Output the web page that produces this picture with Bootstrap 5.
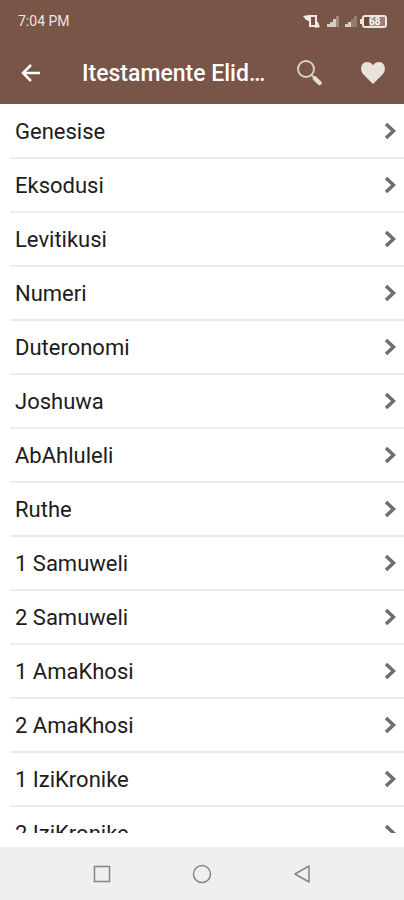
<!DOCTYPE html>
<html lang="xh">
<head>
<meta charset="utf-8">
<meta name="viewport" content="width=device-width, initial-scale=1">
<title>Itestamente Elidala</title>
<link href="https://cdn.jsdelivr.net/npm/bootstrap@5.3.0/dist/css/bootstrap.min.css" rel="stylesheet">
<style>
body { font-family: Roboto, sans-serif; background: #fff; }
.app-top { background: #795548; color: #fff; }
.status { height: 42px; padding: 0 16px 0 18px; font-size: 14px; color: #eee4df; }
.toolbar { height: 62px; padding: 0 16px; }
.toolbar .btn { width: 30px; height: 30px; }
.toolbar h1 { font-size: 23px; line-height: 28px; font-weight: 500; margin-left: 36px; padding-top: 2px; }
.tool-actions { gap: 34px; }
.books { margin-bottom: 14px; padding-top: 1px; }
.book { height: 54px; margin-left: 10px; padding: 0 7px 0 5px; border-bottom: 2px solid #ececec; font-size: 22px; line-height: 28px; color: #1c1c1c; }
.book span { padding-top: 2px; }
.sysnav { height: 53px; background: #efefef; gap: 70px; }
.sysnav .btn { width: 30px; height: 30px; }
</style>
<script src="https://cdn.jsdelivr.net/npm/bootstrap@5.3.0/dist/js/bootstrap.bundle.min.js" defer></script>
</head>
<body class="d-flex flex-column vh-100 overflow-hidden">
<header class="app-top flex-shrink-0">
  <div class="status d-flex align-items-center justify-content-between">
    <span>7:04 PM</span>
    <svg width="86" height="16" viewBox="0 0 86 16" role="img" aria-label="Vibrate, signal, battery 68%">
      <rect x="8" y="3" width="6" height="10" fill="none" stroke="#f1e9e4" stroke-width="2"/><path d="M1 3l6-1v6l-3-1zM18 14l-5 1V8l3 1z" fill="#f1e9e4"/>
      <path d="M25 14v-3h3v-2h3v-3h3v8z" fill="#d8cbc4"/><path d="M34 3h3v11h-3z" fill="#a18a80"/>
      <path d="M43 14v-3h3v-2h3v5z" fill="#d8cbc4"/><path d="M49 6h3v-3h3v11h-6z" fill="#967b70"/>
      <rect x="61" y="3" width="23" height="11" rx="2" fill="#6c493d" stroke="#eee4df" stroke-width="2"/>
      <path d="M58 6h2v5h-2z" fill="#eee4df"/><path d="M67 4h10v9h-10z" fill="#a98f84"/><path d="M77 4h6v9h-6z" fill="#9b8177"/>
      <text x="67" y="12" font-size="10" font-weight="500" fill="#fff">68</text>
    </svg>
  </div>
  <nav class="toolbar d-flex align-items-center">
    <button class="btn p-0 border-0 d-flex align-items-center justify-content-center flex-shrink-0" type="button" aria-label="Back">
      <svg width="20" height="18" viewBox="0 0 20 18" fill="none" stroke="#fff" stroke-width="2.500"><path d="M19 9H2M10 1L2 9l8 8"/></svg>
    </button>
    <h1 class="mb-0 text-nowrap flex-grow-1">Itestamente Elid…</h1>
    <div class="tool-actions d-flex flex-shrink-0">
      <button class="btn p-0 border-0 d-flex align-items-center justify-content-center" type="button" aria-label="Search">
        <svg width="26" height="26" viewBox="0 0 26 26" fill="none"><circle cx="10" cy="9" r="8" stroke="#d9cec8" stroke-width="2"/><path d="M15.500 15l3 3" stroke="#d9cec8" stroke-width="2"/><path d="M19 18.500l4.500 4.500" stroke="#e4dbd5" stroke-width="4.500" stroke-linecap="round"/></svg>
      </button>
      <button class="btn p-0 border-0 d-flex align-items-center justify-content-center" type="button" aria-label="Favourites">
        <svg width="26" height="24" viewBox="0 0 26 24"><path d="M13 23L3.500 13.500C-.5 9.500.5 1 7 1c3 0 5 1.500 6 3.500C14 2.500 16 1 19 1c6.500 0 7.500 8.500 3.500 12.500z" fill="#e9e1dc"/></svg>
      </button>
    </div>
  </nav>
</header>
<svg class="d-none"><symbol id="chev" viewBox="0 0 14 20"><path d="M3 3l7.500 7L3 17" fill="none" stroke="#6e6e6e" stroke-width="3.500"/></symbol></svg>
<main class="books flex-grow-1 overflow-hidden">
  <a class="book d-flex align-items-center justify-content-between text-decoration-none" href="#"><span>Genesise</span><svg width="14" height="20"><use href="#chev"/></svg></a>
  <a class="book d-flex align-items-center justify-content-between text-decoration-none" href="#"><span>Eksodusi</span><svg width="14" height="20"><use href="#chev"/></svg></a>
  <a class="book d-flex align-items-center justify-content-between text-decoration-none" href="#"><span>Levitikusi</span><svg width="14" height="20"><use href="#chev"/></svg></a>
  <a class="book d-flex align-items-center justify-content-between text-decoration-none" href="#"><span>Numeri</span><svg width="14" height="20"><use href="#chev"/></svg></a>
  <a class="book d-flex align-items-center justify-content-between text-decoration-none" href="#"><span>Duteronomi</span><svg width="14" height="20"><use href="#chev"/></svg></a>
  <a class="book d-flex align-items-center justify-content-between text-decoration-none" href="#"><span>Joshuwa</span><svg width="14" height="20"><use href="#chev"/></svg></a>
  <a class="book d-flex align-items-center justify-content-between text-decoration-none" href="#"><span>AbAhluleli</span><svg width="14" height="20"><use href="#chev"/></svg></a>
  <a class="book d-flex align-items-center justify-content-between text-decoration-none" href="#"><span>Ruthe</span><svg width="14" height="20"><use href="#chev"/></svg></a>
  <a class="book d-flex align-items-center justify-content-between text-decoration-none" href="#"><span>1 Samuweli</span><svg width="14" height="20"><use href="#chev"/></svg></a>
  <a class="book d-flex align-items-center justify-content-between text-decoration-none" href="#"><span>2 Samuweli</span><svg width="14" height="20"><use href="#chev"/></svg></a>
  <a class="book d-flex align-items-center justify-content-between text-decoration-none" href="#"><span>1 AmaKhosi</span><svg width="14" height="20"><use href="#chev"/></svg></a>
  <a class="book d-flex align-items-center justify-content-between text-decoration-none" href="#"><span>2 AmaKhosi</span><svg width="14" height="20"><use href="#chev"/></svg></a>
  <a class="book d-flex align-items-center justify-content-between text-decoration-none" href="#"><span>1 IziKronike</span><svg width="14" height="20"><use href="#chev"/></svg></a>
  <a class="book d-flex align-items-center justify-content-between text-decoration-none" href="#"><span>2 IziKronike</span><svg width="14" height="20"><use href="#chev"/></svg></a>
</main>
<footer class="sysnav d-flex align-items-center justify-content-center flex-shrink-0">
  <button class="btn p-0 border-0 d-flex align-items-center justify-content-center" type="button" aria-label="Recent apps"><svg width="18" height="18" fill="none" stroke="#858585" stroke-width="1.500"><rect x="1.500" y="1.500" width="15" height="15"/></svg></button>
  <button class="btn p-0 border-0 d-flex align-items-center justify-content-center" type="button" aria-label="Home"><svg width="20" height="20" fill="none" stroke="#858585" stroke-width="1.500"><circle cx="10" cy="10" r="8.500"/></svg></button>
  <button class="btn p-0 border-0 d-flex align-items-center justify-content-center" type="button" aria-label="Previous"><svg width="18" height="20" fill="none" stroke="#858585" stroke-width="1.500" stroke-linejoin="round"><path d="M16 2v16L2 10z"/></svg></button>
</footer>
</body>
</html>
